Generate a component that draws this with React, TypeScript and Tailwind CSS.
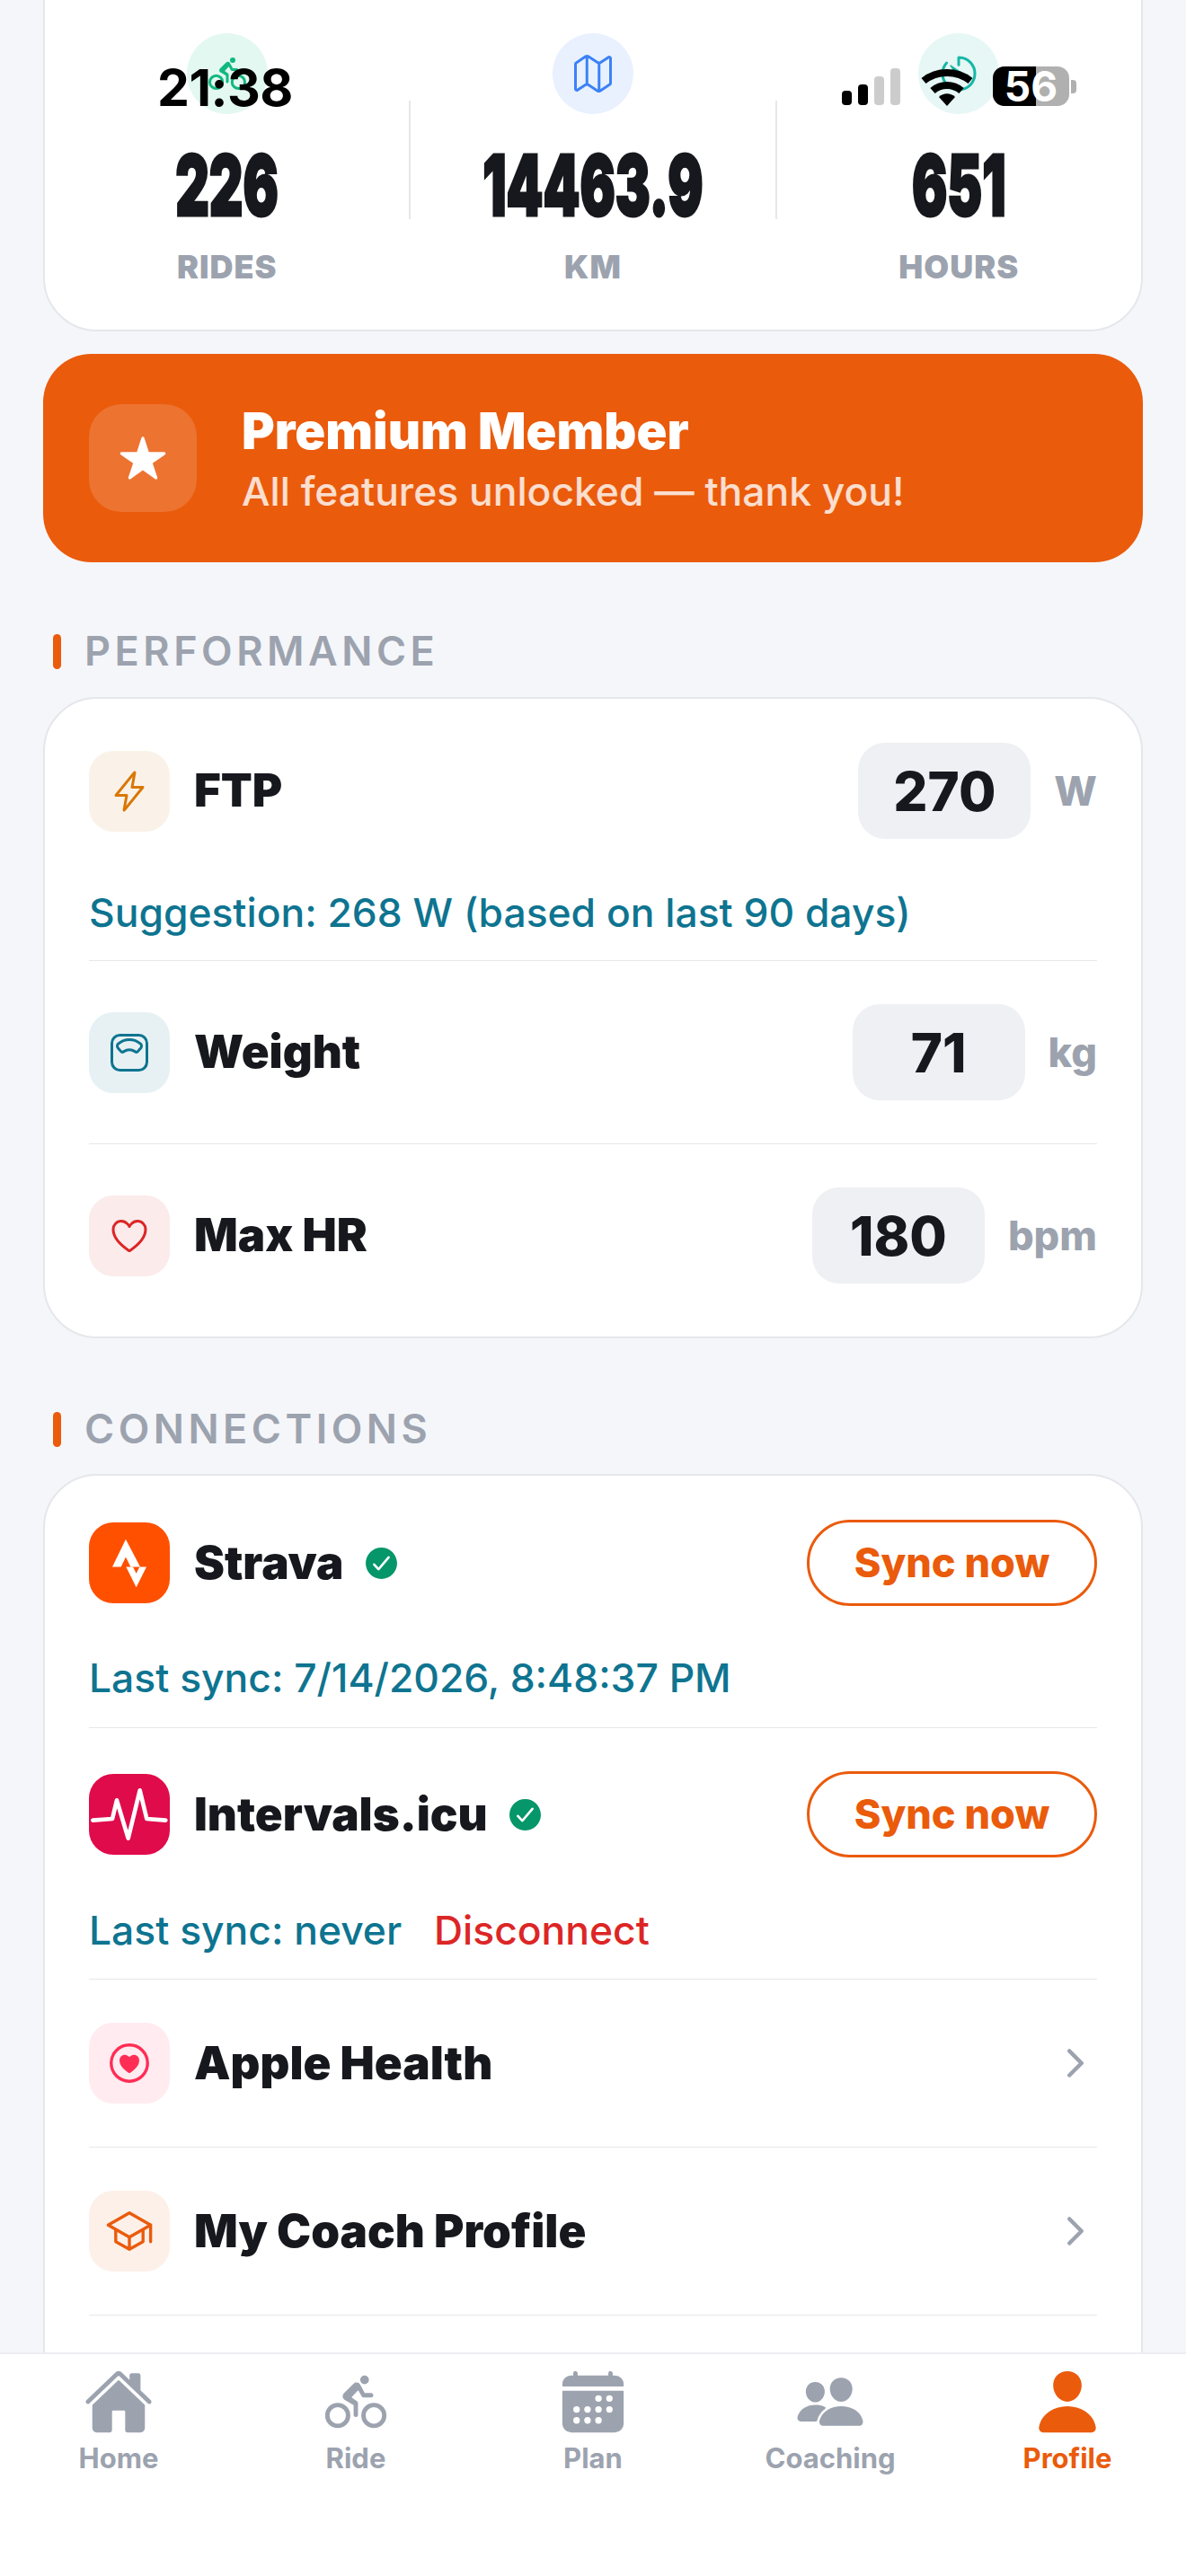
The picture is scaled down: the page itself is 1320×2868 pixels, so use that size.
import type { ReactNode } from "react";
import {
  IoBicycle,
  IoCalendar,
  IoCheckmarkCircle,
  IoChevronForward,
  IoFlashOutline,
  IoHeartCircleOutline,
  IoHeartOutline,
  IoHome,
  IoMapOutline,
  IoPeople,
  IoPerson,
  IoScaleOutline,
  IoSchoolOutline,
  IoStar,
  IoTimerOutline,
} from "react-icons/io5";

const TABS = [
  { label: "Home", icon: <IoHome size={78} /> },
  { label: "Ride", icon: <IoBicycle size={78} /> },
  { label: "Plan", icon: <IoCalendar size={78} /> },
  { label: "Coaching", icon: <IoPeople size={78} /> },
  { label: "Profile", icon: <IoPerson size={78} />, active: true },
];

function StatusBar() {
  return (
    <div className="absolute top-0 inset-x-0 h-[130px] text-black">
      <span className="absolute left-[175px] top-[64px] text-[57px] leading-[68px] font-bold tracking-[-0.5px]">
        21:38
      </span>
      <div className="absolute left-[937px] top-[76px] flex items-end gap-[7px] h-[41px]">
        <div className="w-[11px] h-[16px] rounded-[4px] bg-black" />
        <div className="w-[11px] h-[23px] rounded-[4px] bg-black" />
        <div className="w-[11px] h-[32px] rounded-[4px] bg-[#cccccc]" />
        <div className="w-[11px] h-[41px] rounded-[4px] bg-[#cccccc]" />
      </div>
      <svg className="absolute left-[1025px] top-[75px]" width="58" height="43" viewBox="0 0 58 43" fill="none">
        <path d="M3 15C18 3 40 3 55 15" stroke="#000" strokeWidth="8" />
        <path d="M13 26C22 18 36 18 45 26" stroke="#000" strokeWidth="8" />
        <path d="M20 33C25 28 33 28 38 33L29 43Z" fill="#000" />
      </svg>
      <div className="absolute left-[1105px] top-[74px] w-[85px] h-[44px] rounded-[13px] overflow-hidden flex bg-[#b0b0b0]">
        <div className="w-[48px] h-full bg-black" />
        <span className="absolute inset-0 flex items-center justify-center text-white text-[46px] font-bold leading-none">
          56
        </span>
      </div>
      <div className="absolute left-[1192px] top-[89px] w-[6px] h-[15px] rounded-r-[4px] bg-[#b0b0b0]" />
    </div>
  );
}

function Stat({ icon, circle, value, label }: { icon: ReactNode; circle: string; value: string; label: string }) {
  return (
    <div className="flex-1 flex flex-col items-center">
      <div className={`w-[90px] h-[90px] rounded-full flex items-center justify-center ${circle}`}>{icon}</div>
      <div className="mt-[29px] h-[100px] flex items-center justify-center whitespace-nowrap">
        <span className="inline-block scale-x-[0.62] text-[94px] leading-none font-black text-[#17181d] [-webkit-text-stroke:3px_#17181d]">
          {value}
        </span>
      </div>
      <div className="mt-[19px] text-[36px] leading-[44px] font-black tracking-[1px] text-[#9ca3af]">{label}</div>
    </div>
  );
}

function SectionTitle({ children }: { children: ReactNode }) {
  return (
    <div className="flex items-center gap-[26px] pl-[11px]">
      <div className="w-[9px] h-[39px] rounded-full bg-[#ea5b0c]" />
      <span className="text-[45px] leading-[50px] font-semibold tracking-[4.5px] text-[#9ca3af]">{children}</span>
    </div>
  );
}

function IconBox({ bg, children }: { bg: string; children: ReactNode }) {
  return <div className={`w-[90px] h-[90px] rounded-[27px] flex items-center justify-center shrink-0 ${bg}`}>{children}</div>;
}

function MetricRow({ icon, bg, label, value, unit }: { icon: ReactNode; bg: string; label: string; value: string; unit: string }) {
  return (
    <div className="flex items-center">
      <IconBox bg={bg}>{icon}</IconBox>
      <span className="ml-[27px] flex-1 text-[51px] font-black text-[#17181d]">{label}</span>
      <div className="w-[192px] h-[107px] rounded-[30px] bg-[#eef0f4] flex items-center justify-center text-[60px] font-extrabold text-[#17181d]">
        {value}
      </div>
      <span className="ml-[26px] text-[45px] font-extrabold text-[#9ca3af]">{unit}</span>
    </div>
  );
}

function SyncRow({ logo, name }: { logo: ReactNode; name: string }) {
  return (
    <div className="flex items-center">
      {logo}
      <span className="ml-[27px] text-[51px] leading-[64px] font-black text-[#17181d]">{name}</span>
      <IoCheckmarkCircle size={43} className="ml-[20px] text-[#059669]" />
      <button className="ml-auto w-[323px] h-[96px] rounded-full border-[3px] border-[#ea5b0c] text-[#ea5b0c] text-[45px] font-extrabold">
        Sync now
      </button>
    </div>
  );
}

function LinkRow({ icon, bg, label }: { icon: ReactNode; bg: string; label: string }) {
  return (
    <div className="flex items-center py-[48px] border-b border-[#e5e7eb]">
      <IconBox bg={bg}>{icon}</IconBox>
      <span className="ml-[27px] flex-1 text-[51px] leading-[64px] font-black text-[#17181d]">{label}</span>
      <IoChevronForward size={48} className="text-[#9ca3af]" />
    </div>
  );
}

export default function App() {
  return (
    <div className="relative h-[2868px] overflow-hidden bg-[#f5f6f9] font-['Inter',sans-serif]">
      <main className="px-[48px] -mt-[60px]">
        {/* Stats */}
        <section className="h-[429px] rounded-[60px] border-2 border-[#e5e7eb] bg-white pt-[95px] flex items-start">
          <div className="flex-1 flex items-center">
            <Stat icon={<IoBicycle size={48} className="text-[#10b981]" />} circle="bg-[#e3f8f0]" value="226" label="RIDES" />
            <div className="w-[2px] h-[132px] bg-[#e5e7eb]" />
            <Stat icon={<IoMapOutline size={48} className="text-[#3b82f6]" />} circle="bg-[#e9f0fe]" value="14463.9" label="KM" />
            <div className="w-[2px] h-[132px] bg-[#e5e7eb]" />
            <Stat icon={<IoTimerOutline size={48} className="text-[#14b8a6]" />} circle="bg-[#e6f7f5]" value="651" label="HOURS" />
          </div>
        </section>

        {/* Premium */}
        <section className="mt-[25px] h-[232px] rounded-[54px] bg-[#ea5b0c] pl-[51px] flex items-center">
          <div className="w-[120px] h-[120px] rounded-[36px] bg-white/15 flex items-center justify-center">
            <IoStar size={54} className="text-white" />
          </div>
          <div className="ml-[50px]">
            <div className="text-[56px] leading-[66px] font-black text-white">Premium Member</div>
            <div className="mt-[7px] text-[44.4px] leading-[54px] font-medium text-white/80">All features unlocked — thank you!</div>
          </div>
        </section>

        <div className="mt-[74px] mb-[26px]">
          <SectionTitle>PERFORMANCE</SectionTitle>
        </div>

        {/* Performance */}
        <section className="rounded-[60px] border-2 border-[#e5e7eb] bg-white px-[49px] pt-[49px] pb-[59px]">
          <MetricRow
            icon={<IoFlashOutline size={48} className="text-[#d97706]" />}
            bg="bg-[#faf2e8]"
            label="FTP"
            value="270"
            unit="W"
          />
          <div className="mt-[55px] pb-[26px] border-b border-[#e5e7eb] text-[44.4px] leading-[54px] font-medium text-[#0e7490]">
            Suggestion: 268 W (based on last 90 days)
          </div>
          <div className="py-[48px] border-b border-[#e5e7eb]">
            <MetricRow
              icon={<IoScaleOutline size={48} className="text-[#0e7490]" />}
              bg="bg-[#e7f1f4]"
              label="Weight"
              value="71"
              unit="kg"
            />
          </div>
          <div className="pt-[48px]">
            <MetricRow
              icon={<IoHeartOutline size={48} className="text-[#dc2626]" />}
              bg="bg-[#fbebeb]"
              label="Max HR"
              value="180"
              unit="bpm"
            />
          </div>
        </section>

        <div className="mt-[76px] mb-[25px]">
          <SectionTitle>CONNECTIONS</SectionTitle>
        </div>

        {/* Connections */}
        <section className="rounded-[60px] border-2 border-[#e5e7eb] bg-white px-[49px] pt-[49px] pb-[100px]">
          <SyncRow
            name="Strava"
            logo={
              <div className="w-[90px] h-[90px] rounded-[27px] bg-[#ff5000] flex items-center justify-center shrink-0">
                <svg width="38" height="55" viewBox="195 163 114 160" fill="#fff">
                  <path d="M240 163L195 255H224L240 222L256 255H288Z" />
                  <path d="M241 255L275 323L309 255H286L275 277L264 255Z" />
                </svg>
              </div>
            }
          />
          <div className="mt-[53px] pb-[28px] border-b border-[#e5e7eb] text-[44.4px] leading-[54px] font-medium text-[#0e7490]">
            Last sync: 7/14/2026, 8:48:37 PM
          </div>
          <div className="pt-[48px]">
            <SyncRow
              name="Intervals.icu"
              logo={
                <div className="w-[90px] h-[90px] rounded-[27px] bg-[#e00b4b] shrink-0">
                  <svg width="90" height="90" viewBox="27 30 270 270" fill="none">
                    <path
                      d="M40 185L105 180L120 118L158 245L197 85L220 180L283 185"
                      stroke="#fff"
                      strokeWidth="14"
                      strokeLinejoin="round"
                      strokeLinecap="round"
                    />
                  </svg>
                </div>
              }
            />
          </div>
          <div className="mt-[54px] pb-[27px] border-b border-[#e5e7eb] text-[44.4px] leading-[54px] font-medium text-[#0e7490]">
            Last sync: never
            <span className="ml-[36px] text-[#dc2626]">Disconnect</span>
          </div>
          <LinkRow icon={<IoHeartCircleOutline size={54} className="text-[#ff2d55]" />} bg="bg-[#ffebf0]" label="Apple Health" />
          <LinkRow icon={<IoSchoolOutline size={54} className="text-[#ea5b0c]" />} bg="bg-[#fdf0e9]" label="My Coach Profile" />
        </section>
      </main>

      <StatusBar />

      {/* Tab bar */}
      <nav className="absolute bottom-0 inset-x-0 h-[249px] bg-white border-t-2 border-[#eceef1] flex items-start pt-[14px]">
        {TABS.map((tab) => (
          <div key={tab.label} className={`flex-1 flex flex-col items-center ${tab.active ? "text-[#ea5b0c]" : "text-[#9ca3af]"}`}>
            {tab.icon}
            <span className="mt-[5px] text-[31px] leading-[38px] font-bold">{tab.label}</span>
          </div>
        ))}
      </nav>
    </div>
  );
}
